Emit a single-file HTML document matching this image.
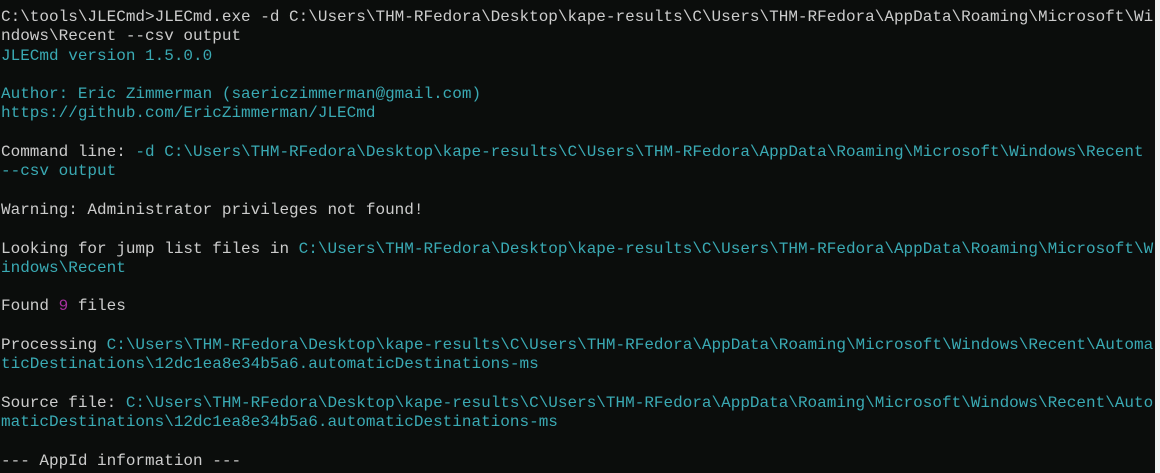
<!DOCTYPE html>
<html><head><meta charset="utf-8"><style>
html,body{margin:0;padding:0;background:#0b0d0c;width:1160px;height:473px;overflow:hidden}
body{position:relative}
pre{margin:0;position:absolute;left:1px;top:8px;font-family:"Liberation Mono",monospace;font-size:16px;line-height:19.3px;color:#cccccc;white-space:pre}
.c{color:#3aaab4}.p{color:#a6309e}
.edge{position:absolute;right:0;top:0;width:5px;height:473px;background:#f0f0f0}
</style></head><body>
<pre>C:\tools\JLECmd&gt;JLECmd.exe -d C:\Users\THM-RFedora\Desktop\kape-results\C\Users\THM-RFedora\AppData\Roaming\Microsoft\Wi
ndows\Recent --csv output
<span class="c">JLECmd version 1.5.0.0</span>

<span class="c">Author: Eric Zimmerman (saericzimmerman@gmail.com)</span>
<span class="c">https://github.com/EricZimmerman/JLECmd</span>

Command line: <span class="c">-d C:\Users\THM-RFedora\Desktop\kape-results\C\Users\THM-RFedora\AppData\Roaming\Microsoft\Windows\Recent</span>
<span class="c">--csv output</span>

Warning: Administrator privileges not found!

Looking for jump list files in <span class="c">C:\Users\THM-RFedora\Desktop\kape-results\C\Users\THM-RFedora\AppData\Roaming\Microsoft\W</span>
<span class="c">indows\Recent</span>

Found <span class="p">9</span> files

Processing <span class="c">C:\Users\THM-RFedora\Desktop\kape-results\C\Users\THM-RFedora\AppData\Roaming\Microsoft\Windows\Recent\Automa</span>
<span class="c">ticDestinations\12dc1ea8e34b5a6.automaticDestinations-ms</span>

Source file: <span class="c">C:\Users\THM-RFedora\Desktop\kape-results\C\Users\THM-RFedora\AppData\Roaming\Microsoft\Windows\Recent\Auto</span>
<span class="c">maticDestinations\12dc1ea8e34b5a6.automaticDestinations-ms</span>

--- AppId information ---</pre>
<div class="edge"></div>
</body></html>
